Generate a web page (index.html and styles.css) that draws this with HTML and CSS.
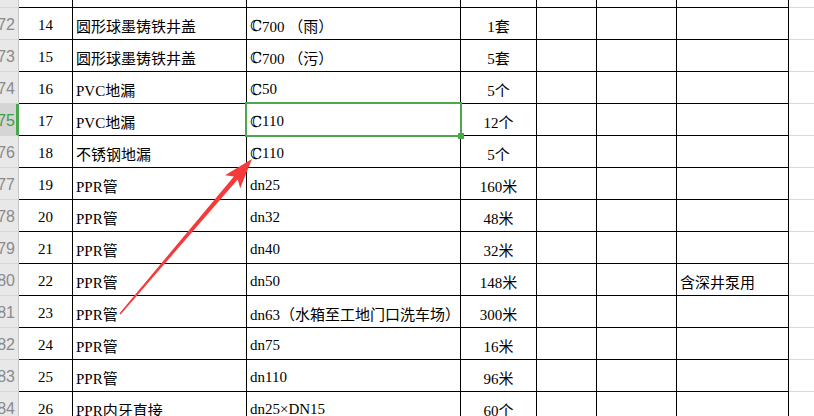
FILE: index.html
```html
<!DOCTYPE html>
<html lang="zh-CN">
<head>
<meta charset="utf-8">
<title>Sheet</title>
<link rel="stylesheet" href="styles.css">
</head>
<body>
<div class="sheet">
  <div class="grid">
    <div class="rh top"></div><div class="c"></div><div class="c"></div><div class="c"></div><div class="c"></div><div class="c"></div><div class="c"></div><div class="c"></div><div class="c ext"></div>

    <div class="rh"><span>72</span></div><div class="c ctr">14</div><div class="c txt">圆形球墨铸铁井盖</div><div class="c txt"><span class="phi">ℂ</span>700 （雨）</div><div class="c ctr">1套</div><div class="c"></div><div class="c"></div><div class="c"></div><div class="c ext"></div>

    <div class="rh"><span>73</span></div><div class="c ctr">15</div><div class="c txt">圆形球墨铸铁井盖</div><div class="c txt"><span class="phi">ℂ</span>700 （污）</div><div class="c ctr">5套</div><div class="c"></div><div class="c"></div><div class="c"></div><div class="c ext"></div>

    <div class="rh"><span>74</span></div><div class="c ctr">16</div><div class="c txt">PVC地漏</div><div class="c txt"><span class="phi">ℂ</span>50</div><div class="c ctr">5个</div><div class="c"></div><div class="c"></div><div class="c"></div><div class="c ext"></div>

    <div class="rh sel"><span>75</span></div><div class="c ctr">17</div><div class="c txt">PVC地漏</div><div class="c txt active"><span class="phi">ℂ</span>110</div><div class="c ctr">12个</div><div class="c"></div><div class="c"></div><div class="c"></div><div class="c ext"></div>

    <div class="rh"><span>76</span></div><div class="c ctr">18</div><div class="c txt">不锈钢地漏</div><div class="c txt"><span class="phi">ℂ</span>110</div><div class="c ctr">5个</div><div class="c"></div><div class="c"></div><div class="c"></div><div class="c ext"></div>

    <div class="rh"><span>77</span></div><div class="c ctr">19</div><div class="c txt">PPR管</div><div class="c txt">dn25</div><div class="c ctr">160米</div><div class="c"></div><div class="c"></div><div class="c"></div><div class="c ext"></div>

    <div class="rh"><span>78</span></div><div class="c ctr">20</div><div class="c txt">PPR管</div><div class="c txt">dn32</div><div class="c ctr">48米</div><div class="c"></div><div class="c"></div><div class="c"></div><div class="c ext"></div>

    <div class="rh"><span>79</span></div><div class="c ctr">21</div><div class="c txt">PPR管</div><div class="c txt">dn40</div><div class="c ctr">32米</div><div class="c"></div><div class="c"></div><div class="c"></div><div class="c ext"></div>

    <div class="rh"><span>80</span></div><div class="c ctr">22</div><div class="c txt">PPR管</div><div class="c txt">dn50</div><div class="c ctr">148米</div><div class="c"></div><div class="c"></div><div class="c txt">含深井泵用</div><div class="c ext"></div>

    <div class="rh"><span>81</span></div><div class="c ctr">23</div><div class="c txt">PPR管</div><div class="c txt">dn63（水箱至工地门口洗车场）</div><div class="c ctr">300米</div><div class="c"></div><div class="c"></div><div class="c"></div><div class="c ext"></div>

    <div class="rh"><span>82</span></div><div class="c ctr">24</div><div class="c txt">PPR管</div><div class="c txt">dn75</div><div class="c ctr">16米</div><div class="c"></div><div class="c"></div><div class="c"></div><div class="c ext"></div>

    <div class="rh"><span>83</span></div><div class="c ctr">25</div><div class="c txt">PPR管</div><div class="c txt">dn110</div><div class="c ctr">96米</div><div class="c"></div><div class="c"></div><div class="c"></div><div class="c ext"></div>

    <div class="rh"><span>84</span></div><div class="c ctr">26</div><div class="c txt">PPR内牙直接</div><div class="c txt">dn25×DN15</div><div class="c ctr">60个</div><div class="c"></div><div class="c"></div><div class="c"></div><div class="c ext"></div>
  </div>

  <svg class="arrow" width="814" height="416" viewBox="0 0 814 416" aria-hidden="true">
    <polygon fill="#f43a3a" points="252,159 240.2,188.3 237.7,179.6 120.6,314.5 119.4,313.5 233.9,176.4 225,175.3"/>
  </svg>
</div>
</body>
</html>
```

FILE: styles.css
```css
html, body {
  margin: 0;
  padding: 0;
  background: #ffffff;
}

.sheet {
  position: relative;
  width: 814px;
  height: 416px;
  overflow: hidden;
  font-family: "Liberation Serif", "Noto Sans CJK SC", "DejaVu Serif", serif;
  font-size: 15px;
  color: #000;
}

.grid {
  display: grid;
  grid-template-columns: 19px 54px 174px 214px 76px 60px 80px 112px 1fr;
  grid-template-rows: 8px repeat(13, 32px);
}

.c {
  box-sizing: border-box;
  border-right: 1px solid #000;
  border-bottom: 1px solid #000;
  display: flex;
  align-items: center;
  padding-top: 4px;
  white-space: nowrap;
  overflow: visible;
  background: #fff;
}

.ctr {
  justify-content: center;
}

.txt {
  justify-content: flex-start;
  padding-left: 3px;
}

.ext {
  border-right: none;
  border-bottom: 1px solid #d9d9d9;
}

.phi {
  font-family: "DejaVu Serif", serif;
  font-size: 15px;
}

.active {
  position: relative;
}

.active::after {
  content: "";
  position: absolute;
  left: -2px;
  top: -2px;
  right: -2px;
  bottom: -2px;
  border: 2px solid #4aa84a;
  pointer-events: none;
}

.active::before {
  content: "";
  position: absolute;
  right: -4px;
  bottom: -4px;
  width: 6px;
  height: 6px;
  background: #4aa84a;
  z-index: 2;
}

.rh {
  box-sizing: border-box;
  background: #e8e8e8;
  border-right: 1px solid #c6c6c6;
  border-bottom: 1px solid #d6d6d6;
  display: flex;
  align-items: center;
  justify-content: flex-end;
  overflow: hidden;
  padding-right: 3px;
  padding-top: 2px;
  font-family: "Liberation Sans", "DejaVu Sans", sans-serif;
  font-size: 16px;
  color: #8a8a8a;
}

.rh span {
  flex: none;
}

.rh.sel {
  background: #d5d5d5;
  border-right: 3px solid #4aa84a;
  padding-right: 1px;
  color: #3f9e46;
}

.arrow {
  position: absolute;
  left: 0;
  top: 0;
  pointer-events: none;
}
```
